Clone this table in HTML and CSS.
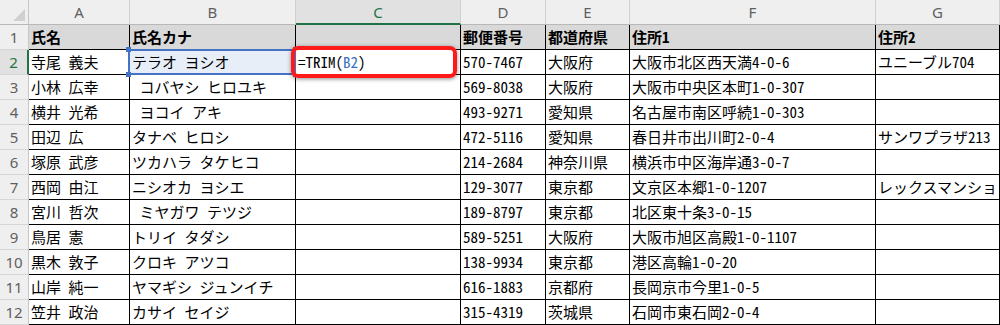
FILE: index.html
```html
<!DOCTYPE html>
<html lang="ja">
<head>
<meta charset="utf-8">
<title>TRIM</title>
<link rel="stylesheet" href="styles.css">
</head>
<body>
<div class="sheet">
  <div class="corner"><span class="tri"></span></div>
  <div class="ch">A</div>
  <div class="ch">B</div>
  <div class="ch sel">C</div>
  <div class="ch">D</div>
  <div class="ch">E</div>
  <div class="ch">F</div>
  <div class="ch">G</div>

  <div class="rh">1</div>
  <div class="c hd">氏名</div><div class="c hd">氏名カナ</div><div class="c hd"></div><div class="c hd">郵便番号</div><div class="c hd">都道府県</div><div class="c hd">住所1</div><div class="c hd">住所2</div>

  <div class="rh rsel">2</div>
  <div class="c">寺尾 義夫</div>
  <div class="c ref">テラオ ヨシオ<span class="hdl tl"></span><span class="hdl bl"></span><span class="hdl tr"></span><span class="hdl br"></span></div>
  <div class="c edit">=TRIM(<span class="blue">B2</span>)<span class="redbox"></span></div>
  <div class="c">570-7467</div><div class="c">大阪府</div><div class="c">大阪市北区西天満4-0-6</div><div class="c">ユニーブル704</div>

  <div class="rh">3</div>
  <div class="c">小林 広幸</div><div class="c"> コバヤシ ヒロユキ</div><div class="c"></div><div class="c">569-8038</div><div class="c">大阪府</div><div class="c">大阪市中央区本町1-0-307</div><div class="c"></div>

  <div class="rh">4</div>
  <div class="c">横井 光希</div><div class="c">　ヨコイ アキ</div><div class="c"></div><div class="c">493-9271</div><div class="c">愛知県</div><div class="c">名古屋市南区呼続1-0-303</div><div class="c"></div>

  <div class="rh">5</div>
  <div class="c">田辺 広</div><div class="c">タナベ ヒロシ</div><div class="c"></div><div class="c">472-5116</div><div class="c">愛知県</div><div class="c">春日井市出川町2-0-4</div><div class="c">サンワプラザ213</div>

  <div class="rh">6</div>
  <div class="c">塚原 武彦</div><div class="c">ツカハラ　タケヒコ</div><div class="c"></div><div class="c">214-2684</div><div class="c">神奈川県</div><div class="c">横浜市中区海岸通3-0-7</div><div class="c"></div>

  <div class="rh">7</div>
  <div class="c">西岡 由江</div><div class="c">ニシオカ ヨシエ</div><div class="c"></div><div class="c">129-3077</div><div class="c">東京都</div><div class="c">文京区本郷1-0-1207</div><div class="c">レックスマンション101</div>

  <div class="rh">8</div>
  <div class="c">宮川 哲次</div><div class="c">　ミヤガワ　テツジ</div><div class="c"></div><div class="c">189-8797</div><div class="c">東京都</div><div class="c">北区東十条3-0-15</div><div class="c"></div>

  <div class="rh">9</div>
  <div class="c">鳥居 憲</div><div class="c">トリイ タダシ</div><div class="c"></div><div class="c">589-5251</div><div class="c">大阪府</div><div class="c">大阪市旭区高殿1-0-1107</div><div class="c"></div>

  <div class="rh">10</div>
  <div class="c">黒木 敦子</div><div class="c">クロキ　アツコ</div><div class="c"></div><div class="c">138-9934</div><div class="c">東京都</div><div class="c">港区高輪1-0-20</div><div class="c"></div>

  <div class="rh">11</div>
  <div class="c">山岸 純一</div><div class="c">ヤマギシ ジュンイチ</div><div class="c"></div><div class="c">616-1883</div><div class="c">京都府</div><div class="c">長岡京市今里1-0-5</div><div class="c"></div>

  <div class="rh">12</div>
  <div class="c">笠井 政治</div><div class="c">カサイ セイジ</div><div class="c"></div><div class="c">315-4319</div><div class="c">茨城県</div><div class="c">石岡市東石岡2-0-4</div><div class="c"></div>
</div>
</body>
</html>
```
FILE: styles.css
```css
html, body {
  margin: 0;
  padding: 0;
  overflow: hidden;
  background: #ffffff;
}

.sheet {
  display: grid;
  grid-template-columns: 29px 101px 166px 165px 85px 84px 246px 124px;
  grid-template-rows: 25px repeat(12, 25px);
  width: 1000px;
  font-family: "Noto Sans CJK JP", sans-serif;
  font-size: 15px;
  font-weight: 400;
  font-feature-settings: "hwid";
  color: #000;
}

.corner {
  box-sizing: border-box;
  background: #efefef;
  border-right: 1px solid #c6c6c6;
  border-bottom: 1px solid #b8b8b8;
  display: flex;
  align-items: flex-end;
  justify-content: flex-end;
  padding: 0 3px 3px 0;
}

.tri {
  width: 12px;
  height: 12px;
  background: #d0d0d0;
  clip-path: polygon(100% 0, 100% 100%, 0 100%);
}

.ch {
  box-sizing: border-box;
  background: #efefef;
  border-right: 1px solid #d0d0d0;
  border-bottom: 1px solid #b8b8b8;
  display: flex;
  align-items: center;
  justify-content: center;
  font-family: "Noto Sans", sans-serif;
  font-feature-settings: normal;
  font-weight: 400;
  font-size: 15px;
  color: #5f5f5f;
}

.ch.sel {
  background: #e1e1e1;
  color: #217346;
  border-bottom: 2px solid #217346;
}

.rh {
  box-sizing: border-box;
  background: #efefef;
  border-right: 1px solid #c6c6c6;
  border-bottom: 1px solid #d6d6d6;
  display: flex;
  align-items: center;
  justify-content: center;
  font-family: "Noto Sans", sans-serif;
  font-feature-settings: normal;
  font-weight: 400;
  font-size: 15px;
  color: #5f5f5f;
}

.rh.rsel {
  background: #e1e1e1;
  color: #217346;
  border-right: 2px solid #217346;
}

.c {
  box-sizing: border-box;
  border-right: 1px solid #000;
  border-bottom: 1px solid #000;
  padding: 0 0 0 2px;
  line-height: 24px;
  white-space: pre;
  overflow: hidden;
}

.c.hd {
  background: #d9d9d9;
  font-weight: 700;
}

.c.ref {
  position: relative;
  overflow: visible;
  background: #e8eef8;
}

.c.ref::after {
  content: "";
  position: absolute;
  left: -2px;
  top: -1px;
  right: -1px;
  bottom: -1px;
  border: 2px solid #4472c4;
}

.hdl {
  position: absolute;
  width: 5px;
  height: 5px;
  background: #4472c4;
  z-index: 2;
}

.hdl.tl { left: -4px; top: -3px; }
.hdl.bl { left: -4px; bottom: -3px; }
.hdl.tr { right: -3px; top: -3px; }
.hdl.br { right: -3px; bottom: -3px; }

.c.edit {
  position: relative;
  overflow: visible;
  background: #fff;
  z-index: 3;
}

.blue {
  color: #3a6fc4;
}

.redbox {
  position: absolute;
  left: -5px;
  top: -4px;
  width: 166px;
  height: 32px;
  box-sizing: border-box;
  border: 4px solid #ff1a1a;
  border-radius: 7px;
  box-shadow: 0 1px 4px rgba(0, 0, 0, 0.45);
}
```
